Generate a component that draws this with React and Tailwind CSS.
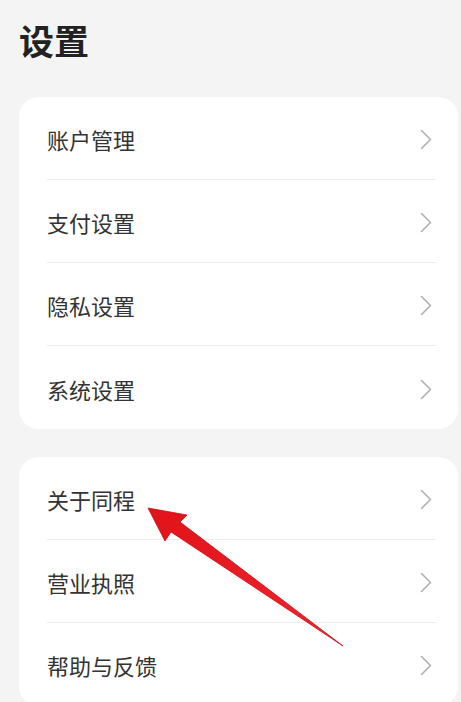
const groups = [
  ["账户管理", "支付设置", "隐私设置", "系统设置"],
  ["关于同程", "营业执照", "帮助与反馈"],
];

function Chevron() {
  return (
    <svg width="12" height="21" viewBox="0 0 12 21" fill="none" className="mr-[4px]">
      <path d="M1.5 1.5 L10.5 10.5 L1.5 19.5" stroke="#b0b0b0" strokeWidth="1.6" strokeLinecap="round" strokeLinejoin="round" />
    </svg>
  );
}

function Row({ label, last }) {
  return (
    <div className="flex h-[83px] items-center pl-[28px] pr-[22px]">
      <div className={`flex h-full flex-1 items-center justify-between pt-[3px] ${last ? "" : "border-b border-[#ededed]"}`}>
        <span className="text-[22px] text-[#333333]">{label}</span>
        <Chevron />
      </div>
    </div>
  );
}

export default function App() {
  return (
    <div
      className="relative h-[702px] w-[461px] overflow-hidden bg-[#f4f4f4]"
      style={{ fontFamily: '"Noto Sans CJK SC", "Noto Sans", sans-serif' }}
    >
      <h1 className="pl-[19px] pt-[16px] text-[35px] font-bold leading-[48px] text-[#222222]">设置</h1>
      <div className="mt-[33px] flex flex-col gap-[28px]">
        {groups.map((items, gi) => (
          <div key={gi} className="ml-[19px] mr-[3px] rounded-[20px] bg-white">
            {items.map((label, i) => (
              <Row key={label} label={label} last={i === items.length - 1 && gi === 0} />
            ))}
          </div>
        ))}
      </div>
      <svg className="pointer-events-none absolute left-0 top-0" width="461" height="702">
        <defs>
          <linearGradient id="ar" x1="0" y1="0" x2="1" y2="1">
            <stop offset="0" stopColor="#e0121a" />
            <stop offset="1" stopColor="#f0262c" />
          </linearGradient>
        </defs>
        <polygon
          points="148,508 187,515 180,522 343,646 171,532 165,541"
          fill="url(#ar)"
          stroke="#c80f16"
          strokeWidth="0.8"
          strokeLinejoin="round"
        />
      </svg>
    </div>
  );
}
